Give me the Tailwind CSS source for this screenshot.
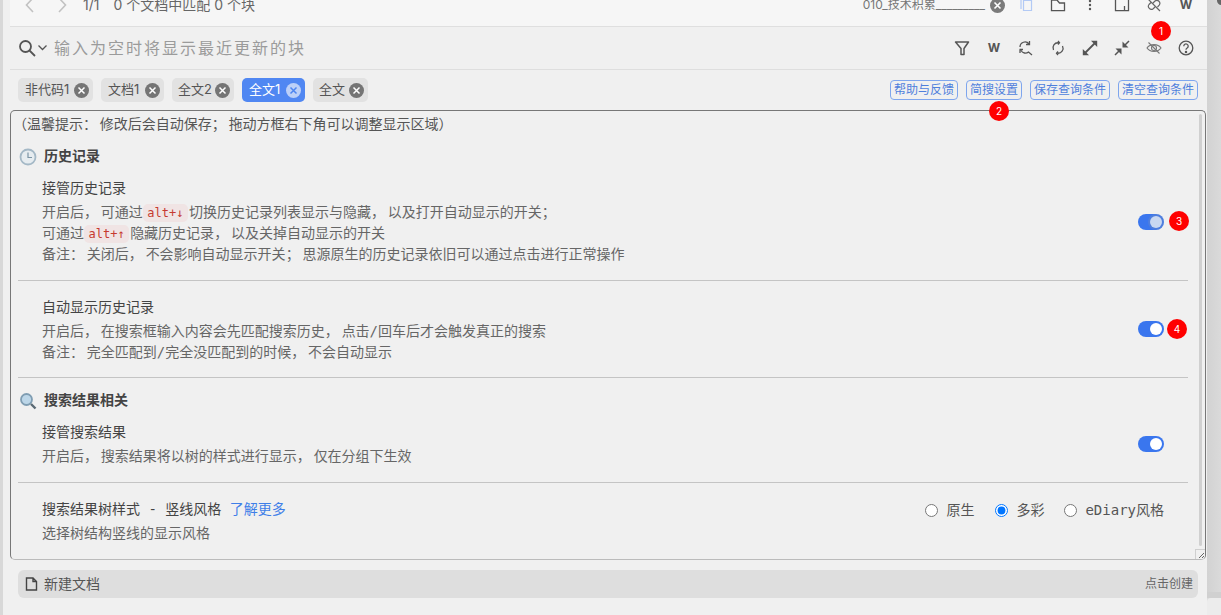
<!DOCTYPE html>
<html lang="zh-CN"><head><meta charset="utf-8"><script src="https://cdn.jsdelivr.net/npm/@tailwindcss/browser@4"></script></head>
<body class="w-[1221px] h-[615px] overflow-hidden bg-[#f0f0f0] font-['Inter','Noto_Sans_CJK_SC',sans-serif] text-[#555]">
<div class="flex h-[615px] relative">
  <div class="w-[3px] shrink-0 bg-[#d8d8d8]"></div>
  <div class="w-[1204px] shrink-0 flex flex-col pl-[7px] bg-[#f0f0f0]">
    <!-- top bar -->
    <div class="h-[27px] shrink-0 bg-[#f6f6f6] border-b border-[#dfdfdf] overflow-hidden pl-1 pr-[5px]">
      <div class="flex items-center h-4 -mt-[3px]">
        <div class="w-8 h-4 flex justify-center"><svg width="16" height="16" viewBox="0 0 16 16" fill="none" stroke="#c2c2c2" stroke-width="1.6"><path d="M11 1 4.5 8l6.5 7"/></svg></div>
        <div class="w-8 h-4 flex justify-center"><svg width="16" height="16" viewBox="0 0 16 16" fill="none" stroke="#c2c2c2" stroke-width="1.6"><path d="m5 1 6.5 7L5 15"/></svg></div>
        <span class="ml-[5px] text-[14px] text-[#666] leading-4">1/1</span>
        <span class="ml-[14px] text-[14px] text-[#666] leading-4">0 个文档中匹配 0 个块</span>
        <span class="ml-auto text-[12px] text-[#777] leading-4">010_技术积累_________</span>
        <span class="ml-[5px] w-[15px] h-[15px] rounded-full bg-[#7b7b7b] flex items-center justify-center"><svg width="9" height="9" viewBox="0 0 9 9" stroke="#fff" stroke-width="1.6"><path d="m1.5 1.5 6 6m0-6-6 6"/></svg></span>
        <div class="ml-[5px] w-8 flex justify-center"><svg width="16" height="16" viewBox="0 0 16 16" fill="none" stroke="#b3caf5" stroke-width="1.2"><path d="M3 12V1M5.5 3.5h8v10h-8z"/></svg></div>
        <div class="w-8 flex justify-center"><svg width="16" height="16" viewBox="0 0 16 16" fill="none" stroke="#555" stroke-width="1.3"><path d="M1.5 3v10.600h13V6H9.500L7 3z"/></svg></div>
        <div class="w-8 flex justify-center"><svg width="16" height="16" viewBox="0 0 16 16" fill="#555"><circle cx="8" cy="4" r="1.200"/><circle cx="8" cy="8" r="1.200"/><circle cx="8" cy="12" r="1.200"/></svg></div>
        <div class="w-8 flex justify-center"><svg width="16" height="16" viewBox="0 0 16 16" fill="none" stroke="#555" stroke-width="1.3"><path d="M1.500 1v12.600h13V1M10.500 9v4.500"/></svg></div>
        <div class="w-8 flex justify-center"><svg width="16" height="16" viewBox="0 0 16 16" fill="none" stroke="#666" stroke-width="1.200"><path d="m2 2 12 12M5 5.500 3 7.500a3 3 0 0 0 4.200 4.200L9 10M7 6 9 4a3 3 0 0 1 4.200 4.200L11.500 10"/></svg></div>
        <div class="w-8 text-center text-[12px] font-bold leading-4 text-[#555]">W</div>
      </div>
    </div>
    <!-- search row -->
    <div class="h-[43px] shrink-0 border-b border-[#dedede] flex items-center pl-2 pr-[5px]">
      <svg width="18" height="18" viewBox="0 0 18 18" fill="none" stroke="#555" stroke-width="1.800"><circle cx="7.500" cy="7.500" r="5.500"/><path d="m11.500 11.500 5.500 5.500"/></svg>
      <svg class="ml-[1px]" width="11" height="8" viewBox="0 0 11 8" fill="none" stroke="#555" stroke-width="1.300"><path d="m1.500 1.500 4 4 4-4"/></svg>
      <span class="ml-[6px] text-[16px] tracking-[2px] text-[#9b9b9b]">输入为空时将显示最近更新的块</span>
      <div class="ml-auto w-8 flex justify-center"><svg width="16" height="16" viewBox="0 0 16 16" fill="none" stroke="#555" stroke-width="1.500"><path d="M1.500 2h13L10 8.500v6H7v-6z" stroke-linejoin="round"/></svg></div>
      <div class="w-8 text-center text-[12px] font-bold text-[#555]">W</div>
      <div class="w-8 flex justify-center"><svg width="16" height="16" viewBox="0 0 16 16" fill="none" stroke="#555" stroke-width="1.300"><path d="M2 7a5 5 0 0 1 9-3M11.500 1v3.500H8M1.500 9.500H5M2 9.500V13M3 10.500a5 5 0 0 0 7.500 1.500l3.500 3"/></svg></div>
      <div class="w-8 flex justify-center"><svg width="16" height="16" viewBox="0 0 16 16" fill="none" stroke="#555" stroke-width="1.300"><path d="M3.500 10a5 5 0 0 1 5-7.200M12.500 6a5 5 0 0 1-5 7.200M8 1l1.500 1.800L8 4.500M8 11.500l-1.500 1.800L8 15"/></svg></div>
      <div class="w-8 flex justify-center"><svg width="16" height="16" viewBox="0 0 16 16" fill="#555" stroke="#555" stroke-width="1.800"><path d="m2.500 13.500 11-11"/><path d="M9 .8h6.200V7zM.8 9v6.200H7z" stroke="none"/></svg></div>
      <div class="w-8 flex justify-center"><svg width="16" height="16" viewBox="0 0 16 16" fill="#555" stroke="#555" stroke-width="1.500"><path d="m1 15 5-5M15 1l-5 5"/><path d="M8.500 1.500v6h6zM1.500 8.500h6v6z" stroke="none"/></svg></div>
      <div class="w-8 flex justify-center"><svg width="16" height="16" viewBox="0 0 16 16" fill="none" stroke="#777" stroke-width="1.100"><path d="M1 8c3-4.500 11-4.500 14 0-3 4.500-11 4.500-14 0z"/><circle cx="8" cy="8" r="2.500"/><path d="m2.500 2.500 11 11"/></svg></div>
      <div class="w-8 flex justify-center"><svg width="16" height="16" viewBox="0 0 16 16" fill="none" stroke="#555" stroke-width="1.300"><circle cx="8" cy="8" r="6.800"/><path d="M5.800 6.200a2.200 2.200 0 1 1 3.400 1.800c-.8.500-1.200 1-1.200 1.800"/><circle cx="8" cy="12" r=".6" fill="#555"/></svg></div>
    </div>
    <!-- tags -->
    <div class="h-[40px] shrink-0 pt-2 pl-2 pr-[9px] flex items-start">
      <div class="w-[75px] h-6 pl-[7px] pr-1 mr-2 rounded-[5px] bg-[#e2e2e2] flex items-center justify-between text-[13px]">非代码1<span class="w-[15px] h-[15px] rounded-full bg-[#757575] flex items-center justify-center"><svg width="9" height="9" viewBox="0 0 9 9" stroke="#fff" stroke-width="1.500"><path d="m1.500 1.500 6 6m0-6-6 6"/></svg></span></div>
      <div class="w-[63px] h-6 pl-[7px] pr-1 mr-2 rounded-[5px] bg-[#e2e2e2] flex items-center justify-between text-[13px]">文档1<span class="w-[15px] h-[15px] rounded-full bg-[#757575] flex items-center justify-center"><svg width="9" height="9" viewBox="0 0 9 9" stroke="#fff" stroke-width="1.500"><path d="m1.500 1.500 6 6m0-6-6 6"/></svg></span></div>
      <div class="w-[62px] h-6 pl-[6px] pr-1 mr-2 rounded-[5px] bg-[#e2e2e2] flex items-center justify-between text-[13px]">全文2<span class="w-[15px] h-[15px] rounded-full bg-[#757575] flex items-center justify-center"><svg width="9" height="9" viewBox="0 0 9 9" stroke="#fff" stroke-width="1.500"><path d="m1.500 1.500 6 6m0-6-6 6"/></svg></span></div>
      <div class="w-[63px] h-6 pl-[7px] pr-1 mr-2 rounded-[5px] bg-[#5087f2] text-white flex items-center justify-between text-[13px]">全文1<span class="w-[15px] h-[15px] rounded-full bg-[#bcd0f8] flex items-center justify-center"><svg width="9" height="9" viewBox="0 0 9 9" stroke="#4d85f0" stroke-width="1.500"><path d="m1.500 1.500 6 6m0-6-6 6"/></svg></span></div>
      <div class="w-[55px] h-6 pl-[6px] pr-1 rounded-[5px] bg-[#e2e2e2] flex items-center justify-between text-[13px]">全文<span class="w-[15px] h-[15px] rounded-full bg-[#757575] flex items-center justify-center"><svg width="9" height="9" viewBox="0 0 9 9" stroke="#fff" stroke-width="1.500"><path d="m1.500 1.500 6 6m0-6-6 6"/></svg></span></div>
      <div class="ml-auto flex gap-2 mt-[2px]">
        <span class="h-5 px-[3px] rounded-[4px] border border-[#7fa6ee] text-[12px] leading-[18px] text-[#4f7fdc]">帮助与反馈</span>
        <span class="h-5 px-[3px] rounded-[4px] border border-[#7fa6ee] text-[12px] leading-[18px] text-[#4f7fdc]">简搜设置</span>
        <span class="h-5 px-[3px] rounded-[4px] border border-[#7fa6ee] text-[12px] leading-[18px] text-[#4f7fdc]">保存查询条件</span>
        <span class="h-5 px-[3px] rounded-[4px] border border-[#7fa6ee] text-[12px] leading-[18px] text-[#4f7fdc]">清空查询条件</span>
      </div>
    </div>
    <!-- settings box -->
    <div class="relative h-[450px] w-[1196px] shrink-0 border border-[#777] border-b-[#bbb] rounded-[5px] overflow-hidden flex font-['DejaVu_Sans_Mono','Noto_Sans_CJK_SC',monospace] text-[14px] leading-[21px]">
      <div class="flex-1 min-w-0 pt-[3px]">
        <div class="pl-[2px] text-[#555]">（温馨提示<span class="tracking-[2.8px]">：</span>修改后会自动保存<span class="tracking-[2.8px]">；</span>拖动方框右下角可以调整显示区域）</div>
        <div class="w-[1170px] ml-[7px]">
          <div class="mt-[11px] flex items-center font-bold text-[#444]">
            <svg class="ml-[1px]" width="18" height="18" viewBox="0 0 18 18" fill="#e6ecf0" stroke="#a4b8c6" stroke-width="1.800"><circle cx="9" cy="9" r="7.500"/><path d="M9 4.500V9.500H13" fill="none" stroke="#7b94a5" stroke-width="1.200"/></svg>
            <span class="ml-[7px]">历史记录</span>
          </div>
          <div class="mt-[11px] px-6 pb-[15px] border-b border-[#c4c4c4] flex items-center justify-between">
            <div>
              <div class="text-[#444] mb-[3px]">接管历史记录</div>
              <div class="text-[#666]">开启后<span class="tracking-[2.8px]">，</span>可通过<code class="mr-[1px] px-[4.5px] py-[2px] rounded-[5px] bg-[#f0e4e4] text-[#c63a30] text-[12px] leading-none font-['DejaVu_Sans_Mono',monospace]">alt+↓</code>切换历史记录列表显示与隐藏<span class="tracking-[2.8px]">，</span>以及打开自动显示的开关<span class="tracking-[2.8px]">；</span></div>
              <div class="text-[#666]">可通过<code class="mr-[1px] px-[4.5px] py-[2px] rounded-[5px] bg-[#f0e4e4] text-[#c63a30] text-[12px] leading-none font-['DejaVu_Sans_Mono',monospace]">alt+↑</code>隐藏历史记录<span class="tracking-[2.8px]">，</span>以及关掉自动显示的开关</div>
              <div class="text-[#666]">备注<span class="tracking-[2.8px]">：</span>关闭后<span class="tracking-[2.8px]">，</span>不会影响自动显示开关<span class="tracking-[2.8px]">；</span>思源原生的历史记录依旧可以通过点击进行正常操作</div>
            </div>
            <div class="w-[26px] h-4 rounded-full bg-[#3a76ee] flex items-center justify-end pr-[2px]"><span class="w-3 h-3 rounded-full bg-[#c9d8f1] shadow-[0_0_0_2px_rgba(160,160,160,0.2)]"></span></div>
          </div>
          <div class="pt-4 px-6 pb-[14px] border-b border-[#c4c4c4] flex items-center justify-between">
            <div>
              <div class="text-[#444] mb-[3px]">自动显示历史记录</div>
              <div class="text-[#666]">开启后<span class="tracking-[2.8px]">，</span>在搜索框输入内容会先匹配搜索历史<span class="tracking-[2.8px]">，</span>点击/回车后才会触发真正的搜索</div>
              <div class="text-[#666]">备注<span class="tracking-[2.8px]">：</span>完全匹配到/完全没匹配到的时候<span class="tracking-[2.8px]">，</span>不会自动显示</div>
            </div>
            <div class="w-[26px] h-4 mb-[2px] rounded-full bg-[#3a76ee] flex items-center justify-end pr-[2px]"><span class="w-3 h-3 rounded-full bg-white"></span></div>
          </div>
          <div class="mt-3 flex items-center font-bold text-[#444]">
            <svg class="ml-[1px]" width="18" height="18" viewBox="0 0 18 18" fill="#bcd6e8" stroke="#7f9db2" stroke-width="1.800"><circle cx="7.500" cy="7.500" r="5.500"/><path d="m12 12 4.500 4.500" stroke="#5a6a74" stroke-width="2.400"/></svg>
            <span class="ml-[7px]">搜索结果相关</span>
          </div>
          <div class="mt-[11px] px-6 pb-[15px] border-b border-[#c4c4c4] flex items-center justify-between">
            <div>
              <div class="text-[#444] mb-[3px]">接管搜索结果</div>
              <div class="text-[#666]">开启后<span class="tracking-[2.8px]">，</span>搜索结果将以树的样式进行显示<span class="tracking-[2.8px]">，</span>仅在分组下生效</div>
            </div>
            <div class="w-[26px] h-4 mb-[2px] rounded-full bg-[#3a76ee] flex items-center justify-end pr-[2px]"><span class="w-3 h-3 rounded-full bg-white"></span></div>
          </div>
          <div class="pt-4 px-6 flex items-start justify-between">
            <div>
              <div class="text-[#444] mb-[3px]">搜索结果树样式 - 竖线风格 <span class="text-[#3f7fe8]">了解更多</span></div>
              <div class="text-[#666]">选择树结构竖线的显示风格</div>
            </div>
            <div class="flex items-center h-[21px] mt-[1px] text-[#555]">
              <input type="radio" name="s" class="w-[13px] h-[13px] m-0"><span class="ml-2">原生</span>
              <input type="radio" name="s" checked class="w-[13px] h-[13px] m-0 ml-[21px]"><span class="ml-2">多彩</span>
              <input type="radio" name="s" class="w-[13px] h-[13px] m-0 ml-5"><span class="ml-2">eDiary风格</span>
            </div>
          </div>
        </div>
      </div>
      <div class="w-[3px] h-[432px] mt-[3px] mr-[3px] bg-[#d0d0d0] rounded-full shrink-0"></div>
      <div class="absolute right-0 bottom-0 w-[10px] h-[10px] bg-[#f0f0f0] border-l border-t border-[#cfcfcf]">
        <svg width="9" height="9" viewBox="0 0 9 9" stroke="#666" stroke-width="1"><path d="m3 8 5-5M6 8l2-2"/></svg>
      </div>
    </div>
    <!-- new doc bar -->
    <div class="mt-[10px] ml-2 w-[1180px] h-7 shrink-0 rounded-[6px] bg-[#dedede] flex items-center pl-[7px] pr-[5px]">
      <svg width="13" height="14" viewBox="0 0 13 14" fill="none" stroke="#444" stroke-width="1.400"><path d="M1.500 1h6.500l3.500 3.500V13h-10zM8 1v3.500h3.500"/></svg>
      <span class="ml-[6px] mb-[2px] text-[14px] text-[#555]">新建文档</span>
      <span class="ml-auto text-[12px] text-[#666]">点击创建</span>
    </div>
  </div>
  <!-- right strip -->
  <div class="w-[14px] shrink-0 flex flex-col bg-[#dcdcdc]">
    <div class="h-[592px] bg-gradient-to-r from-[#d2d2d2] to-[#dadada]"></div>
    <div class="h-[6px] bg-[#d0d0d0]"></div>
    <div class="flex-1 bg-[#ececec] rounded-tl-[4px]"></div>
  </div>
  <!-- overlays -->
  <span class="absolute left-[1217px] top-[-4px] w-[12px] h-[9px] rounded-full bg-[#666]"></span>
  <span class="absolute left-[1151px] top-[21px] w-5 h-5 rounded-full bg-[#f00] text-white text-[10px] flex items-center justify-center">1</span>
  <span class="absolute left-[989px] top-[101px] w-5 h-5 rounded-full bg-[#f00] text-white text-[10px] flex items-center justify-center">2</span>
  <span class="absolute left-[1169px] top-[211px] w-5 h-5 rounded-full bg-[#f00] text-white text-[10px] flex items-center justify-center">3</span>
  <span class="absolute left-[1167px] top-[319px] w-5 h-5 rounded-full bg-[#f00] text-white text-[10px] flex items-center justify-center">4</span>
</div>
</body></html>
